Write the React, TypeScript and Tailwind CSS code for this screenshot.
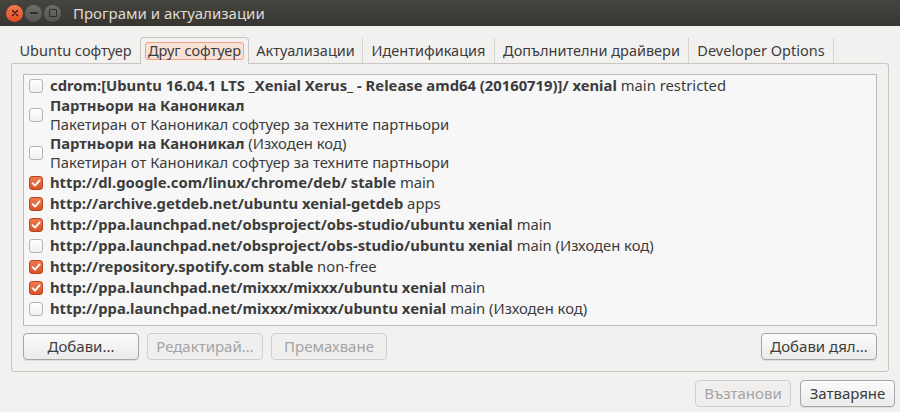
import React from "react";

const FONT = { fontFamily: '"Noto Sans", "Open Sans", sans-serif' };

function Check({ on }: { on: boolean }) {
  if (on) {
    return (
      <div className="w-[14px] h-[14px] rounded-[3px] border border-[#b9461e] bg-gradient-to-b from-[#ef7a4d] to-[#d9512a] flex items-center justify-center shrink-0">
        <svg width="10" height="10" viewBox="0 0 10 10">
          <path d="M1.6 5.2 L4 7.6 L8.6 2.4" stroke="#fff" strokeWidth="1.9" fill="none" strokeLinecap="round" strokeLinejoin="round" />
        </svg>
      </div>
    );
  }
  return <div className="w-[14px] h-[14px] rounded-[3px] border border-[#b4b4b4] bg-gradient-to-b from-[#ffffff] to-[#f0f0f0] shrink-0" />;
}

function Row({ on, bold, rest }: { on: boolean; bold: string; rest?: string }) {
  return (
    <div className="h-[21px] flex items-center pl-[5px]">
      <Check on={on} />
      <div className="ml-[7px] whitespace-nowrap">
        <span className="font-bold">{bold}</span>
        {rest ? <span> {rest}</span> : null}
      </div>
    </div>
  );
}

function Row2({ bold, rest, sub }: { bold: string; rest?: string; sub: string }) {
  return (
    <div className="h-[38px] flex items-center pl-[5px]">
      <Check on={false} />
      <div className="ml-[7px] whitespace-nowrap leading-[19px]">
        <div>
          <span className="font-bold">{bold}</span>
          {rest ? <span> {rest}</span> : null}
        </div>
        <div>{sub}</div>
      </div>
    </div>
  );
}

function Btn({ children, w, disabled }: { children: React.ReactNode; w: string; disabled?: boolean }) {
  if (disabled) {
    return (
      <div className={`${w} h-[27px] rounded-[4px] border border-[#d0cfcd] bg-[#f0efee] text-[#a4a4a4] flex items-center justify-center`}>
        {children}
      </div>
    );
  }
  return (
    <div className={`${w} h-[27px] rounded-[4px] border border-[#a6a6a6] bg-gradient-to-b from-[#fbfbfb] to-[#ebebeb] text-[#3c3c3c] flex items-center justify-center shadow-[0_1px_0_rgba(0,0,0,0.08)]`}>
      {children}
    </div>
  );
}

export default function App() {
  const tabs = [
    { label: "Ubuntu софтуер", w: "w-[129px]" },
    { label: "Друг софтуер", w: "w-[109px]", active: true },
    { label: "Актуализации", w: "w-[113px]" },
    { label: "Идентификация", w: "w-[132px]" },
    { label: "Допълнителни драйвери", w: "w-[194px]" },
    { label: "Developer Options", w: "w-[145px]" },
  ];
  return (
    <div className="w-[900px] h-[412px] bg-[#f2f1f0] text-[#3c3c3c] overflow-hidden flex flex-col" style={FONT}>
      {/* Title bar */}
      <div className="h-[26px] bg-gradient-to-b from-[#45443f] to-[#373632] flex items-center shrink-0">
        <div className="ml-[6px] w-[17px] h-[17px] rounded-full bg-gradient-to-b from-[#f37b4f] to-[#df4a1c] flex items-center justify-center">
          <svg width="8" height="8" viewBox="0 0 8 8">
            <path d="M1.5 1.5 L6.5 6.5 M6.5 1.5 L1.5 6.5" stroke="#3a1a0e" strokeWidth="1.4" strokeLinecap="round" />
          </svg>
        </div>
        <div className="ml-[2px] w-[17px] h-[17px] rounded-full bg-gradient-to-b from-[#6e6d68] to-[#55544f] flex items-center justify-center">
          <div className="w-[8px] h-[2px] bg-[#2e2d2a] rounded-[1px]" />
        </div>
        <div className="ml-[2px] w-[17px] h-[17px] rounded-full bg-gradient-to-b from-[#6e6d68] to-[#55544f] flex items-center justify-center">
          <div className="w-[8px] h-[8px] border-[1.5px] border-[#2e2d2a] rounded-[1px]" />
        </div>
        <div className="ml-[12px] text-[15px] text-[#dfdbd2] leading-none">Програми и актуализации</div>
      </div>

      {/* Tabs */}
      <div className="mt-[10px] ml-[11px] flex h-[27px] items-end">
        {tabs.map((t, i) =>
          t.active ? (
            <div
              key={i}
              className={`${t.w} h-[27px] rounded-t-[4px] border border-b-0 border-[#c8c6c3] bg-[#f2f1f0] flex items-center justify-center relative z-10 -mb-[1px] pb-[1px]`}
            >
              <div className="px-[2px] h-[18px] flex items-center rounded-[3px] border border-[#f1a286] bg-[#fae1d6] text-[14.5px]">
                {t.label}
              </div>
            </div>
          ) : (
            <div
              key={i}
              className={`${t.w} h-[25px] flex items-center justify-center text-[14.5px] ${i !== 0 && !tabs[i - 1].active ? "border-l border-[#d6d4d1]" : ""}`}
            >
              {t.label}
            </div>
          )
        )}
        <div className="w-[1px] h-[25px] bg-[#d6d4d1]" />
      </div>

      {/* Panel */}
      <div className="ml-[11px] w-[878px] h-[309px] border border-[#c8c6c3] rounded-b-[3px] rounded-tr-[3px] px-[11px] pt-[10px] flex flex-col">
        <div className="h-[252px] border border-[#bdbbb8] bg-[#f7f7f7] text-[14.8px] overflow-hidden">
          <Row on={false} bold="cdrom:[Ubuntu 16.04.1 LTS _Xenial Xerus_ - Release amd64 (20160719)]/ xenial" rest="main restricted" />
          <Row2 bold="Партньори на Каноникал" sub="Пакетиран от Каноникал софтуер за техните партньори" />
          <Row2 bold="Партньори на Каноникал" rest="(Изходен код)" sub="Пакетиран от Каноникал софтуер за техните партньори" />
          <Row on bold="http://dl.google.com/linux/chrome/deb/ stable" rest="main" />
          <Row on bold="http://archive.getdeb.net/ubuntu xenial-getdeb" rest="apps" />
          <Row on bold="http://ppa.launchpad.net/obsproject/obs-studio/ubuntu xenial" rest="main" />
          <Row on={false} bold="http://ppa.launchpad.net/obsproject/obs-studio/ubuntu xenial" rest="main (Изходен код)" />
          <Row on bold="http://repository.spotify.com stable" rest="non-free" />
          <Row on bold="http://ppa.launchpad.net/mixxx/mixxx/ubuntu xenial" rest="main" />
          <Row on={false} bold="http://ppa.launchpad.net/mixxx/mixxx/ubuntu xenial" rest="main (Изходен код)" />
        </div>
        <div className="mt-[7px] flex text-[15px]">
          <Btn w="w-[116px]">Добави...</Btn>
          <div className="ml-[8px]">
            <Btn w="w-[116px]" disabled>Редактирай...</Btn>
          </div>
          <div className="ml-[8px]">
            <Btn w="w-[116px]" disabled>Премахване</Btn>
          </div>
          <div className="ml-auto">
            <Btn w="w-[116px]">Добави дял...</Btn>
          </div>
        </div>
      </div>

      {/* Bottom buttons */}
      <div className="mt-[8px] flex justify-end pr-[5px] gap-[9px] text-[15px]">
        <Btn w="w-[96px]" disabled>Възтанови</Btn>
        <Btn w="w-[95px]">Затваряне</Btn>
      </div>
    </div>
  );
}
